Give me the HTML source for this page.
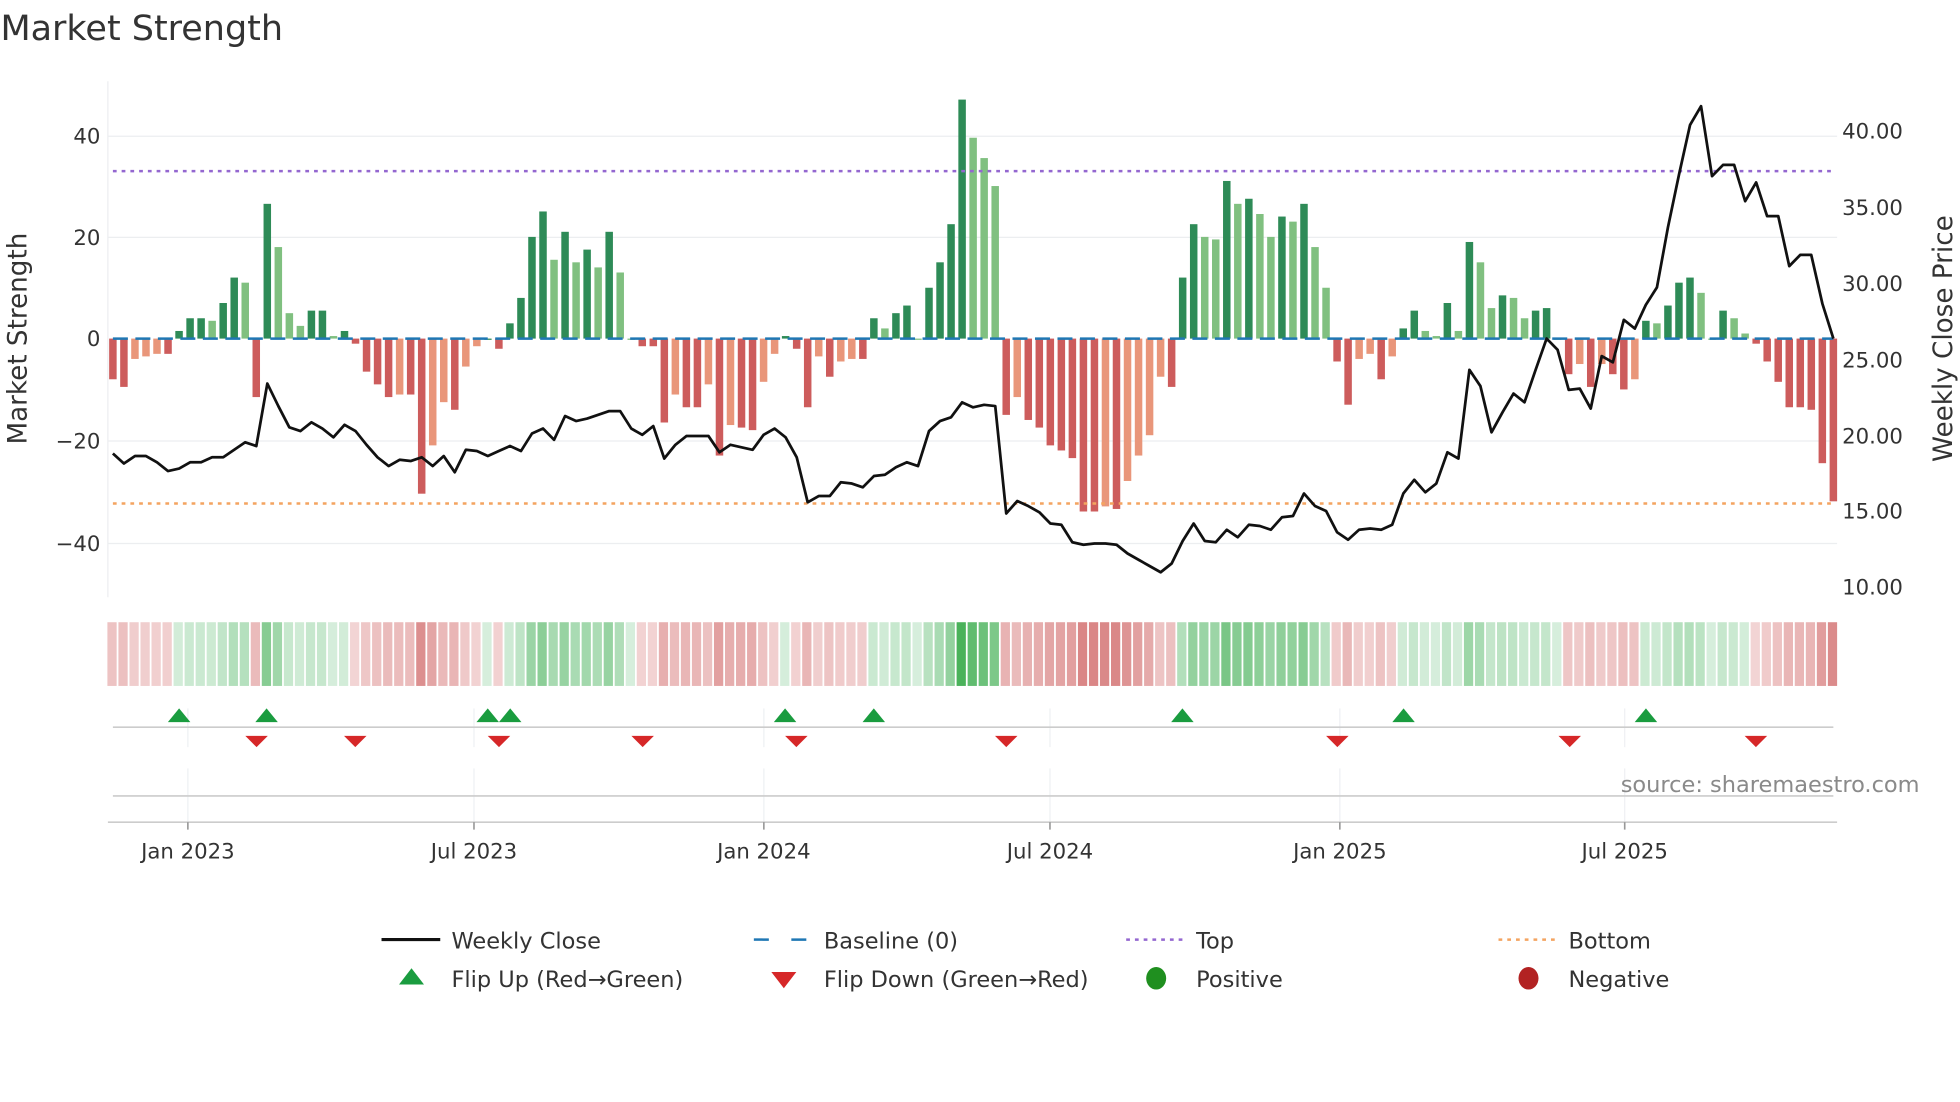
<!DOCTYPE html>
<html><head><meta charset="utf-8">
<style>
html,body{margin:0;padding:0;background:#fff;width:1960px;height:1102px;overflow:hidden}
svg{display:block}
text{font-family:"DejaVu Sans","Liberation Sans",sans-serif;fill:#333}
</style></head>
<body>
<svg id="s" width="1960" height="1102" viewBox="0 0 1568 882" xmlns="http://www.w3.org/2000/svg">
<text x="0" y="32" font-size="28">Market Strength</text>
<!-- grid -->
<g stroke="#eceef0" stroke-width="1">
<line x1="86" y1="109" x2="1470" y2="109"/>
<line x1="86" y1="190" x2="1470" y2="190"/>
<line x1="86" y1="353" x2="1470" y2="353"/>
<line x1="86" y1="435" x2="1470" y2="435"/>
</g>
<line x1="86" y1="65" x2="86" y2="478" stroke="#eceef0"/>
<g font-size="17" text-anchor="end">
<text x="80" y="115">40</text><text x="80" y="196">20</text><text x="80" y="277">0</text>
<text x="80" y="359">−20</text><text x="80" y="441">−40</text>
</g>
<g font-size="17">
<text x="1474" y="111">40.00</text><text x="1474" y="172">35.00</text><text x="1474" y="233">30.00</text>
<text x="1474" y="294">25.00</text><text x="1474" y="355">20.00</text><text x="1474" y="415">15.00</text><text x="1474" y="476">10.00</text>
</g>
<text transform="translate(21,271) rotate(-90)" font-size="21" text-anchor="middle">Market Strength</text>
<text transform="translate(1562,271) rotate(-90)" font-size="21" text-anchor="middle">Weekly Close Price</text>
<g id="bars"></g>
<line x1="90" y1="271" x2="1467" y2="271" stroke="#1f77b4" stroke-width="2" stroke-dasharray="12,6"/>
<line x1="90" y1="137" x2="1467" y2="137" stroke="#9467d0" stroke-width="2" stroke-dasharray="3,4"/>
<line x1="90" y1="403" x2="1467" y2="403" stroke="#f4a460" stroke-width="2" stroke-dasharray="3,4"/>
<polyline id="price" fill="none" stroke="#111" stroke-width="2.2" stroke-linejoin="round"/>
<g id="heat"></g>
<!-- lower panels -->
<g stroke="#eef0f3" stroke-width="1">
<line x1="150" y1="567" x2="150" y2="598"/><line x1="379" y1="567" x2="379" y2="598"/><line x1="611" y1="567" x2="611" y2="598"/>
<line x1="840" y1="567" x2="840" y2="598"/><line x1="1072" y1="567" x2="1072" y2="598"/><line x1="1300" y1="567" x2="1300" y2="598"/>
<line x1="150" y1="615" x2="150" y2="658"/><line x1="379" y1="615" x2="379" y2="658"/><line x1="611" y1="615" x2="611" y2="658"/>
<line x1="840" y1="615" x2="840" y2="658"/><line x1="1072" y1="615" x2="1072" y2="658"/><line x1="1300" y1="615" x2="1300" y2="658"/>
</g>
<line x1="90" y1="582" x2="1467" y2="582" stroke="#ccc" stroke-width="1.3"/>
<line x1="90" y1="637" x2="1467" y2="637" stroke="#ccc" stroke-width="1.3"/>
<line x1="86" y1="658" x2="1470" y2="658" stroke="#ccc" stroke-width="1.3"/>
<g id="flips"></g>
<g stroke="#999" stroke-width="1.3">
<line x1="150" y1="658" x2="150" y2="664"/><line x1="379" y1="658" x2="379" y2="664"/><line x1="611" y1="658" x2="611" y2="664"/>
<line x1="840" y1="658" x2="840" y2="664"/><line x1="1072" y1="658" x2="1072" y2="664"/><line x1="1300" y1="658" x2="1300" y2="664"/>
</g>
<g font-size="17" text-anchor="middle">
<text x="150" y="687">Jan 2023</text><text x="379" y="687">Jul 2023</text><text x="611" y="687">Jan 2024</text>
<text x="840" y="687">Jul 2024</text><text x="1072" y="687">Jan 2025</text><text x="1300" y="687">Jul 2025</text>
</g>
<text x="1536" y="634" font-size="18" text-anchor="end" style="fill:#8a8a8a">source: sharemaestro.com</text>
<!-- legend -->
<g font-size="18">
<line x1="305" y1="752" x2="352" y2="752" stroke="#111" stroke-width="2.5"/><text x="361" y="759">Weekly Close</text>
<line x1="603" y1="752" x2="650" y2="752" stroke="#1f77b4" stroke-width="2" stroke-dasharray="12,18"/><text x="659" y="759">Baseline (0)</text>
<line x1="901" y1="752" x2="946" y2="752" stroke="#9467d0" stroke-width="2" stroke-dasharray="3,4"/><text x="957" y="759">Top</text>
<line x1="1199" y1="752" x2="1244" y2="752" stroke="#f4a460" stroke-width="2" stroke-dasharray="3,4"/><text x="1255" y="759">Bottom</text>
<polygon points="319,788 329,775 339,788" fill="#1a9c3f"/><text x="361" y="790">Flip Up (Red→Green)</text>
<polygon points="617,778 637,778 627,791" fill="#d62728"/><text x="659" y="790">Flip Down (Green→Red)</text>
<ellipse cx="925" cy="783" rx="8" ry="9" fill="#1f8f1f"/><text x="957" y="790">Positive</text>
<ellipse cx="1223" cy="783" rx="8" ry="9" fill="#b22222"/><text x="1255" y="790">Negative</text>
</g>
</svg>
<script>
var v=[-8,-9.5,-4,-3.5,-3,-3,1.5,4,4,3.5,7,12,11,-11.5,26.5,18,5,2.5,5.5,5.5,0.5,1.5,-1,-6.5,-9,-11.5,-11,-11,-30.5,-21,-12.5,-14,-5.5,-1.5,0,-2,3,8,20,25,15.5,21,15,17.5,14,21,13,0,-1.5,-1.5,-16.5,-11,-13.5,-13.5,-9,-23,-17,-17.5,-18,-8.5,-3,0.5,-2,-13.5,-3.5,-7.5,-4.5,-4,-4,4,2,5,6.5,0,10,15,22.5,47,39.5,35.5,30,-15,-11.5,-16,-17.5,-21,-22,-23.5,-34,-34,-33,-33.5,-28,-23,-19,-7.5,-9.5,12,22.5,20,19.5,31,26.5,27.5,24.5,20,24,23,26.5,18,10,-4.5,-13,-4,-3,-8,-3.5,2,5.5,1.5,0.5,7,1.5,19,15,6,8.5,8,4,5.5,6,0,-7,-5,-9.5,-5,-7,-10,-8,3.5,3,6.5,11,12,9,0,5.5,4,1,-1,-4.5,-8.5,-13.5,-13.5,-14,-24.5,-32];
var n=v.length,step=(1467-90)/(n-1),ns="http://www.w3.org/2000/svg";
function el(t,a,p){var e=document.createElementNS(ns,t);for(var k in a)e.setAttribute(k,a[k]);p.appendChild(e);}
var bars=document.getElementById('bars'),heat=document.getElementById('heat');
for(var i=0;i<n;i++){
 var x=90+i*step,val=v[i],prev=i?v[i-1]:val,c;
 if(val>=0)c=(val>=prev)?'#2e8b57':'#80c080';else c=(val<=prev)?'#cd5c5c':'#e9967a';
 var y=271-val*4.07,h=Math.abs(val*4.07);
 el('rect',{x:x-3,y:Math.min(y,271),width:6,height:Math.max(h,1),fill:c},bars);
 var a=Math.min(Math.abs(val)/47,1),f;
 if(val>=0){f='rgb('+Math.round(214-140*a)+','+Math.round(238-60*a)+','+Math.round(220-130*a)+')';}
 else{f='rgb('+Math.round(243-35*a)+','+Math.round(214-110*a)+','+Math.round(214-110*a)+')';}
 el('rect',{x:x-4.4,y:498,width:7.4,height:51,fill:f},heat);
}
var py=[363,371,365,365,370,377,375,370,370,366,366,360,354,357,307,325,342,345,338,343,350,340,345,356,366,373,368,369,366,373,365,378,360,361,365,361,357,361,347,343,352,333,337,335,332,329,329,343,348,341,367,356,349,349,349,362,356,358,360,348,343,350,366,402,397,397,386,387,390,381,380,374,370,373,345,337,334,322,326,324,325,411,401,405,410,419,420,434,436,435,435,436,443,448,453,458,451,433,419,433,434,424,430,420,421,424,414,413,395,405,409,426,432,424,423,424,420,395,384,394,387,362,367,296,309,346,330,315,322,296,271,280,312,311,327,285,290,256,263,244,230,182,140,100,85,141,132,132,161,146,173,173,213,204,204,243,271];
var pts=[];for(var j=0;j<py.length;j++){pts.push((90+j*(1377/(py.length-1))).toFixed(1)+','+py[j]);}
document.getElementById('price').setAttribute('points',pts.join(' '));
var fl=document.getElementById('flips');
[143,213,390,408,628,699,946,1123,1317].forEach(function(x){el('polygon',{points:(x-9)+',578 '+x+',567 '+(x+9)+',578',fill:'#1a9c3f'},fl);});
[205,284,399,514,637,805,1070,1256,1405].forEach(function(x){el('polygon',{points:(x-9)+',589 '+(x+9)+',589 '+x+',598',fill:'#d62728'},fl);});
</script>
</body></html>
